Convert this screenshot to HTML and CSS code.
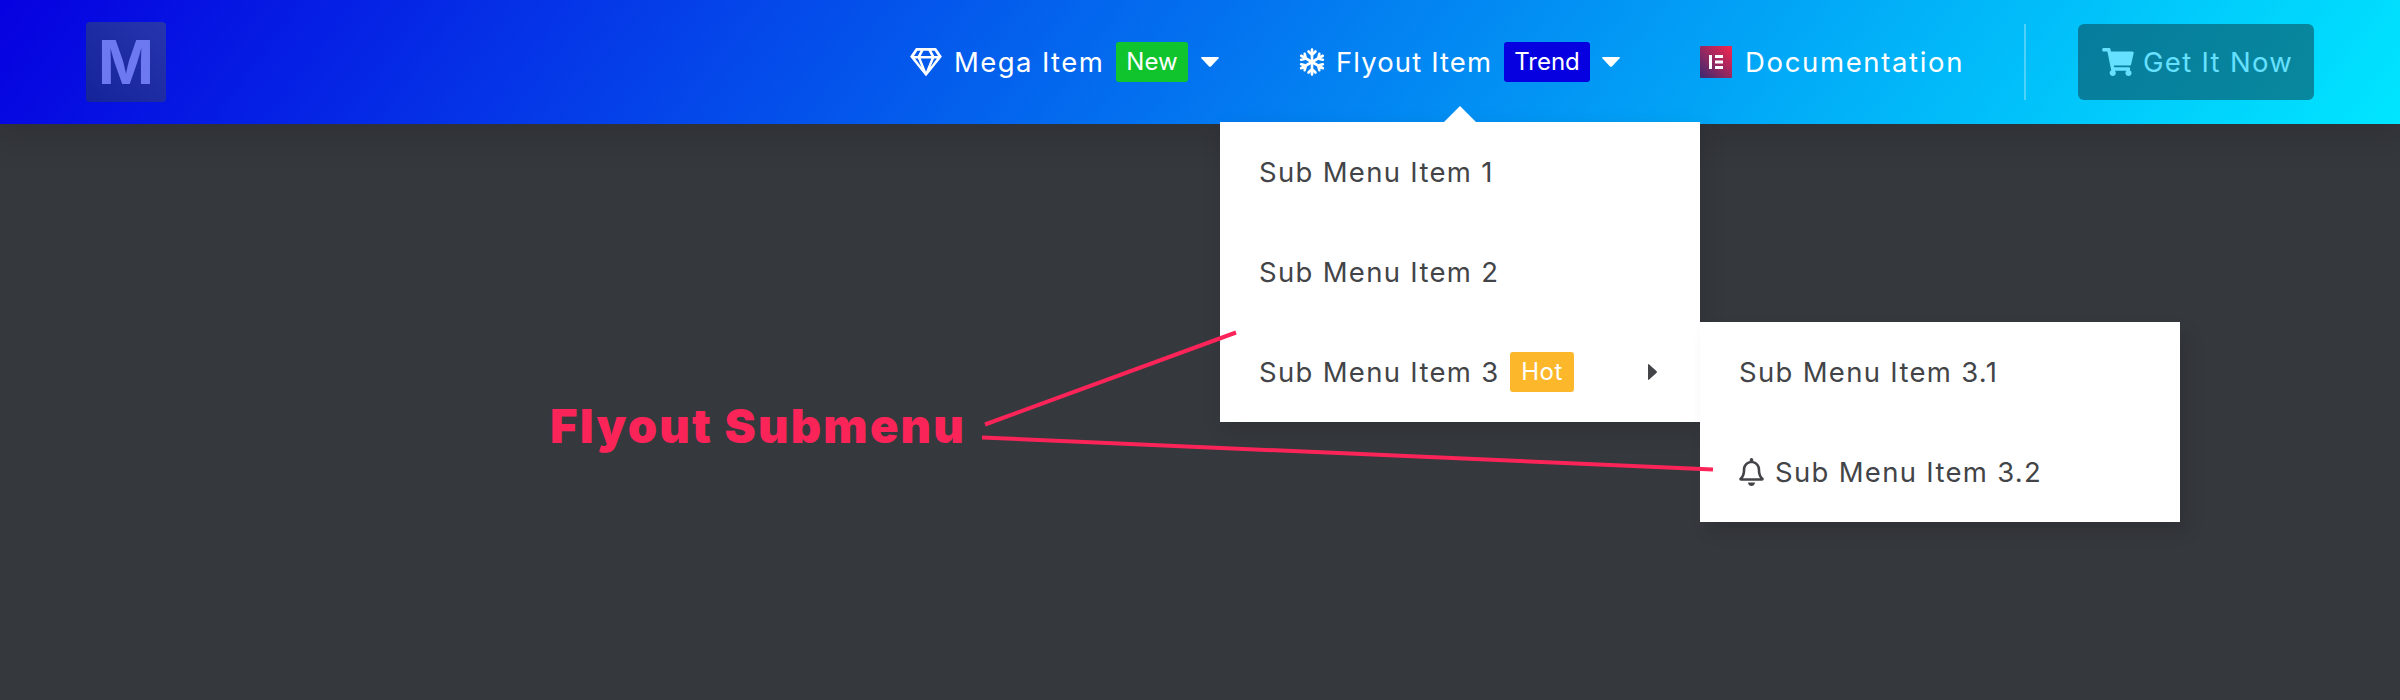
FILE: index.html
```html
<!DOCTYPE html>
<html lang="en">
<head>
<meta charset="utf-8">
<title>Flyout Submenu</title>
<link rel="stylesheet" href="styles.css">
</head>
<body>
<header class="header">
  <a class="logo">M</a>
  <nav class="nav">
    <a class="nav-item nav-mega">
      <svg class="icon-gem" viewBox="0 0 576 512"><path fill="currentColor" d="M464 0H112c-4 0-7.7 2-9.9 5.4L1.6 152.2c-2.6 4.4-2.1 10 1.2 13.9l276 340.8c4.8 5.9 13.8 5.9 18.6 0l276-340.8c3.3-4.1 3.8-9.6 1.2-13.9L473.9 5.4C471.7 2 468.1 0 464 0zm-19.3 48l63.3 96h-68.4l-51.7-96h56.8zm-202.1 0h90.7l51.7 96H191l51.6-96zm-111.3 0h56.8l-51.7 96H68l63.3-96zm-43 144h51.4L208 352 88.3 192zm102.9 0h193.6L288 435.3 191.2 192zM368 352l68.2-160h51.4L368 352z"/></svg>
      <span class="label">Mega Item</span>
      <span class="badge badge-new">New</span>
      <svg class="caret" viewBox="0 0 18 10"><path fill="currentColor" d="M1 0h16q1.500 0 .6 1.200l-7.400 8q-1.200 1.200-2.400 0l-7.400-8Q-.5 0 1 0z"/></svg>
    </a>
    <a class="nav-item nav-flyout">
      <svg class="icon-snow" viewBox="0 0 26 28"><g fill="none" stroke="currentColor" stroke-width="2.600" stroke-linecap="round"><path id="arm" d="M13 14V1.500M9.500 3.500 13 7l3.500-3.500"/><use href="#arm" transform="rotate(60 13 14)"/><use href="#arm" transform="rotate(120 13 14)"/><use href="#arm" transform="rotate(180 13 14)"/><use href="#arm" transform="rotate(240 13 14)"/><use href="#arm" transform="rotate(300 13 14)"/></g></svg>
      <span class="label">Flyout Item</span>
      <span class="badge badge-trend">Trend</span>
      <svg class="caret" viewBox="0 0 18 10"><path fill="currentColor" d="M1 0h16q1.500 0 .6 1.200l-7.400 8q-1.200 1.200-2.400 0l-7.400-8Q-.5 0 1 0z"/></svg>
    </a>
    <a class="nav-item nav-docs">
      <svg class="icon-docs" viewBox="0 0 32 32"><defs><linearGradient id="docs" x1="0" y1="1" x2="1" y2="0"><stop offset="0" stop-color="#3a2a70"/><stop offset="1" stop-color="#f9254f"/></linearGradient></defs><rect width="32" height="32" rx="1" fill="url(#docs)"/><path fill="#fff" d="M9 9h3v14H9zM15 9h8v3h-8zM15 14.500h8v3h-8zM15 20h8v3h-8z"/></svg>
      <span class="label">Documentation</span>
    </a>
  </nav>
  <a class="buy">
    <svg class="icon-cart" viewBox="0 0 576 512"><path fill="currentColor" d="M528.12 301.319l47.273-208C578.806 78.301 567.391 64 551.99 64H159.208l-9.166-44.810C147.758 8.021 137.930 0 126.529 0H24C10.745 0 0 10.745 0 24v16c0 13.255 10.745 24 24 24h69.883l70.248 343.435C147.325 417.100 136 435.222 136 456c0 30.928 25.072 56 56 56s56-25.072 56-56c0-15.674-6.447-29.835-16.824-40h209.647C430.447 426.165 424 440.326 424 456c0 30.928 25.072 56 56 56s56-25.072 56-56c0-22.172-12.888-41.332-31.579-50.405l5.517-24.276c3.413-15.018-8.002-29.319-23.403-29.319H218.117l-6.545-32h293.145c11.206 0 20.920-7.754 23.403-18.681z"/></svg>
    <span class="label">Get It Now</span>
  </a>
</header>
<main class="stage">
  <ul class="flyout flyout-main">
    <li class="row"><span class="label">Sub Menu Item 1</span></li>
    <li class="row"><span class="label">Sub Menu Item 2</span></li>
    <li class="row"><span class="label">Sub Menu Item 3</span><span class="badge badge-hot">Hot</span><svg class="caret-right" viewBox="0 0 9 16"><path fill="currentColor" d="M0 1Q0-.5 1.200.5l7.200 6.500q1.100 1 0 2L1.200 15.500Q0 16.500 0 15z"/></svg></li>
  </ul>
  <ul class="flyout flyout-sub">
    <li class="row"><span class="label">Sub Menu Item 3.1</span></li>
    <li class="row"><svg class="icon-bell" viewBox="0 0 448 512"><path fill="currentColor" d="M439.390 362.290c-19.320-20.760-55.470-51.990-55.470-154.290 0-77.700-54.480-139.900-127.940-155.160V32c0-17.670-14.320-32-31.980-32s-31.980 14.330-31.980 32v20.840C118.560 68.100 64.080 130.300 64.080 208c0 102.300-36.150 133.530-55.470 154.290-6 6.450-8.660 14.160-8.610 21.710.11 16.400 12.980 32 32.100 32h383.800c19.120 0 32-15.600 32.100-32 .05-7.550-2.610-15.270-8.610-21.710zM67.530 368c21.220-27.970 44.420-74.330 44.530-159.420 0-.2-.06-.38-.06-.58 0-61.860 50.140-112 112-112s112 50.140 112 112c0 .2-.06.38-.06.58.11 85.100 23.310 131.460 44.530 159.420H67.530zM224 512c35.320 0 63.970-28.650 63.970-64H160.030c0 35.350 28.650 64 63.970 64z"/></svg><span class="label">Sub Menu Item 3.2</span></li>
  </ul>
  <h1 class="callout">Flyout Submenu</h1>
  <svg class="pointers" viewBox="0 0 2400 700"><path d="M985 424.500 1236 332.500M982 437.500 1713 469.500"/></svg>
</main>
</body>
</html>
```

FILE: styles.css
```css
* { box-sizing: border-box; }
body {
  margin: 0;
  width: 2400px;
  height: 700px;
  overflow: hidden;
  position: relative;
  background: #35383d;
  font-family: Inter, "Liberation Sans", sans-serif;
  font-size: 27.5px;
  font-weight: 375;
  color: #434447;
}
.header {
  display: flex;
  align-items: center;
  height: 124px;
  padding: 0 86px;
  color: #fff;
  background: linear-gradient(127deg, #0600e0, #00e6ff);
  box-shadow: 0 8px 30px 8px rgba(0, 0, 0, .12);
}
.logo {
  width: 80px;
  height: 80px;
  border-radius: 4px;
  background: linear-gradient(45deg, #16249a, #2634ae);
  color: #6c79f0;
  font-size: 60px;
  font-weight: 700;
  line-height: 80px;
  text-align: center;
}
.nav {
  display: flex;
  align-items: center;
  margin-left: 744px;
}
.nav-item { display: flex; align-items: center; height: 76px; }
.label { white-space: nowrap; line-height: 40px; letter-spacing: 1.3px; }
.nav-mega { width: 389px; }
.nav-flyout { width: 401px; }
.nav-docs { width: 326px; border-right: 2px solid rgba(255, 255, 255, .3); }
.nav-mega .label { width: 162px; letter-spacing: 1.4px; }
.nav-flyout .label { width: 168px; letter-spacing: 1.1px; }
.nav-docs .label { letter-spacing: 1.65px; }
.icon-gem { width: 32px; height: 28px; margin-right: 12px; }
.icon-snow { width: 26px; height: 28px; margin-right: 11px; }
.icon-docs { width: 32px; height: 32px; margin-right: 13px; }
.badge {
  height: 40px;
  border-radius: 3px;
  color: #fff;
  font-size: 24px;
  line-height: 39px;
  text-align: center;
}
.badge-new { width: 72px; background: #0fc42d; }
.badge-trend { width: 86px; background: #0600e0; }
.badge-hot { width: 64px; background: #fcb72b; letter-spacing: .5px; }
.caret { width: 18px; height: 10px; margin-left: 13px; }
.nav-flyout .caret { margin-left: 12px; }
.buy {
  display: flex;
  align-items: center;
  width: 236px;
  height: 76px;
  margin-left: 52px;
  padding-left: 24px;
  border-radius: 6px;
  background: linear-gradient(125deg, #067c9c, #08889e);
  color: #66e0ff;
}
.icon-cart { width: 32px; height: 28px; margin-right: 9px; }
.flyout {
  position: absolute;
  width: 480px;
  margin: 0;
  padding: 0;
  list-style: none;
  background: #fff;
  box-shadow: 4px 8px 20px rgba(0, 0, 0, .13);
}
.flyout-main { left: 1220px; top: 122px; }
.flyout-main::before {
  content: "";
  position: absolute;
  left: 224px;
  top: -16px;
  border: 16px solid transparent;
  border-top: 0;
  border-bottom-color: #fff;
}
.flyout-sub { left: 1700px; top: 322px; box-shadow: 8px 10px 16px rgba(0, 0, 0, .12); }
.row {
  display: flex;
  align-items: center;
  height: 100px;
  padding: 0 43px 0 39px;
}
.flyout-main .label { width: 251px; }
.caret-right { width: 9px; height: 16px; margin-left: auto; }
.icon-bell { width: 25px; height: 28px; margin-right: 11px; }
.callout {
  position: absolute;
  left: 550px;
  top: 396px;
  margin: 0;
  color: #fa2459;
  font-size: 47px;
  font-weight: 900;
  line-height: 60px;
  letter-spacing: 2.2px;
  white-space: nowrap;
}
.pointers {
  position: absolute;
  left: 0;
  top: 0;
  width: 2400px;
  height: 700px;
  fill: none;
  stroke: #fa2459;
  stroke-width: 4;
}
```
